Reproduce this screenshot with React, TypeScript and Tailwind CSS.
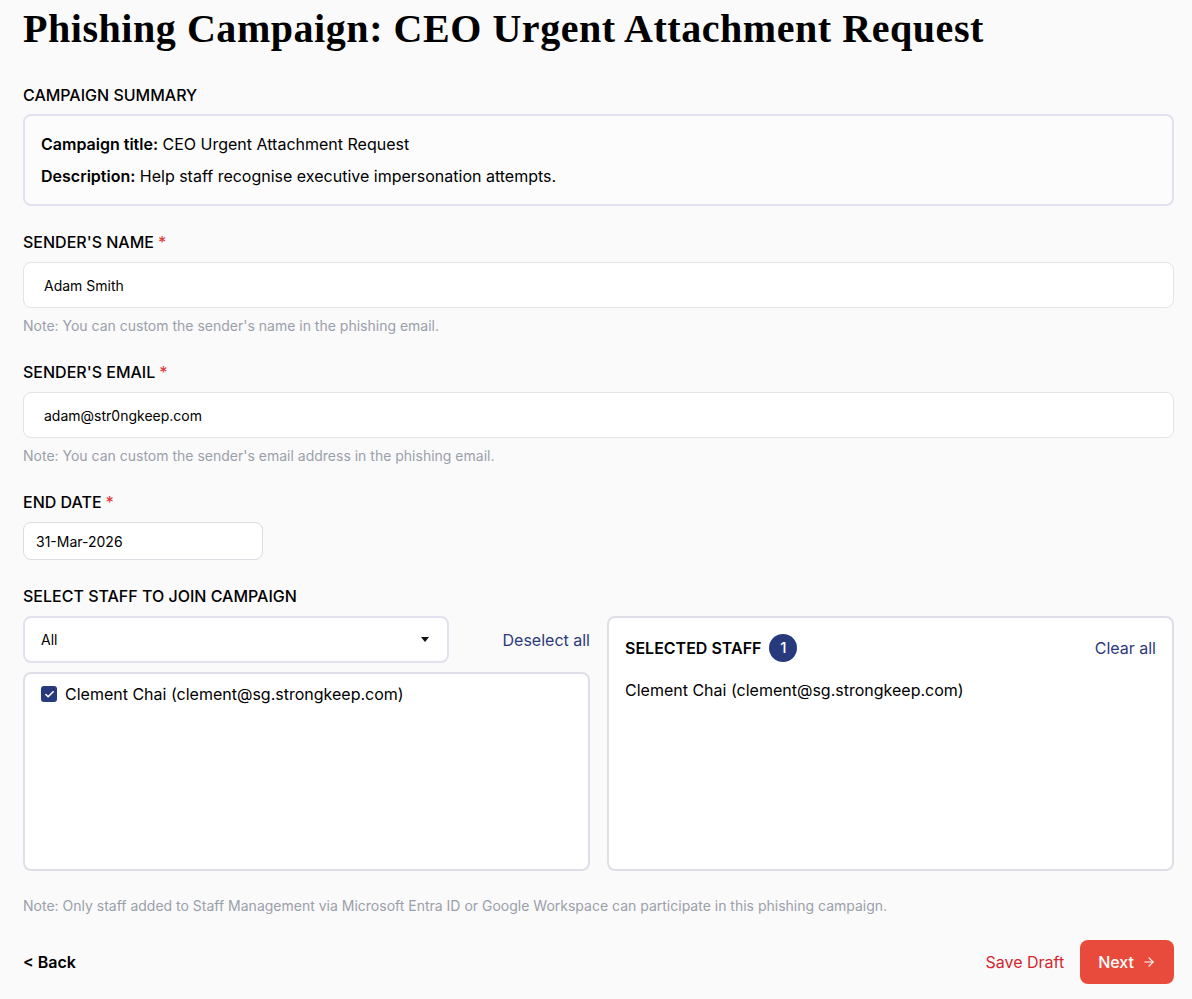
import { ArrowRight, Check } from "lucide-react";

const Label = ({ text, required }: { text: string; required?: boolean }) => (
  <div className="text-[16px] font-medium text-black leading-5">
    {text}
    {required && <span className="text-[#e03b3b] ml-1">*</span>}
  </div>
);

const Note = ({ children }: { children: React.ReactNode }) => (
  <p className="text-[14px] leading-4 text-[#9aa0ab]">{children}</p>
);

const App = () => {
  return (
    <div className="min-h-screen bg-[#fafafa] font-['Inter',sans-serif] text-black pl-[23px] pr-[18px] pt-[8px] pb-[16px]">
      <h1 className="font-['Liberation_Serif',serif] font-bold text-[40px] leading-[42px] tracking-[0.55px]">
        Phishing Campaign: CEO Urgent Attachment Request
      </h1>

      <div className="mt-[35px]">
        <Label text="CAMPAIGN SUMMARY" />
        <div className="mt-[9px] border-2 border-[#e2e2ee] rounded-lg bg-[#fcfcfd] px-[16px] pt-[18px] pb-[18px] text-[16px] leading-5 space-y-[12px]">
          <p>
            <span className="font-semibold">Campaign title:</span> CEO Urgent Attachment Request
          </p>
          <p>
            <span className="font-semibold">Description:</span> Help staff recognise executive impersonation attempts.
          </p>
        </div>
      </div>

      <div className="mt-[26px]">
        <Label text="SENDER'S NAME" required />
        <div className="mt-[10px] h-[46px] flex items-center border border-[#e3e3e8] rounded-lg bg-white px-[20px] text-[14px]">
          Adam Smith
        </div>
        <div className="mt-[10px]">
          <Note>Note: You can custom the sender's name in the phishing email.</Note>
        </div>
      </div>

      <div className="mt-[28px]">
        <Label text="SENDER'S EMAIL" required />
        <div className="mt-[10px] h-[46px] flex items-center border border-[#e3e3e8] rounded-lg bg-white px-[20px] text-[14px]">
          adam@str0ngkeep.com
        </div>
        <div className="mt-[10px]">
          <Note>Note: You can custom the sender's email address in the phishing email.</Note>
        </div>
      </div>

      <div className="mt-[28px]">
        <Label text="END DATE" required />
        <div className="mt-[10px] w-[240px] h-[38px] flex items-center border border-[#dcdce3] rounded-lg bg-white px-[12px] text-[14px]">
          31-Mar-2026
        </div>
      </div>

      <div className="mt-[26px]">
        <Label text="SELECT STAFF TO JOIN CAMPAIGN" />
        <div className="mt-[10px] grid grid-cols-2 gap-[17px]">
          <div className="flex flex-col">
            <div className="flex items-center justify-between">
              <div className="w-[426px] h-[47px] flex items-center justify-between border-2 border-[#e2e2ee] rounded-lg bg-white pl-[16px] pr-[16px] text-[14px]">
                <span>All</span>
                <svg width="8" height="5" viewBox="0 0 8 5" className="mr-[2px]">
                  <path d="M0 0h8L4 5z" fill="#111" />
                </svg>
              </div>
              <button className="text-[16px] text-[#2b3a7c]">Deselect all</button>
            </div>
            <div className="mt-[9px] h-[199px] border-2 border-[#dedee6] rounded-lg bg-white px-[16px] pt-[8px]">
              <label className="flex items-center gap-[8px] text-[16px]">
                <span className="w-[16px] h-[16px] rounded-[3px] bg-[#283a7e] flex items-center justify-center">
                  <Check className="w-[11px] h-[11px] text-white" strokeWidth={3.5} />
                </span>
                Clement Chai (clement@sg.strongkeep.com)
              </label>
            </div>
          </div>

          <div className="border-2 border-[#dedee6] rounded-lg bg-white px-[16px] pt-[16px]">
            <div className="flex items-center justify-between">
              <div className="flex items-center gap-[8px]">
                <span className="text-[16px] font-semibold">SELECTED STAFF</span>
                <span className="w-[28px] h-[28px] rounded-full bg-[#283a7e] text-white text-[15px] font-medium flex items-center justify-center">
                  1
                </span>
              </div>
              <button className="text-[16px] text-[#2b3a7c]">Clear all</button>
            </div>
            <p className="mt-[16px] text-[16px]">Clement Chai (clement@sg.strongkeep.com)</p>
          </div>
        </div>
        <div className="mt-[27px]">
          <Note>
            Note: Only staff added to Staff Management via Microsoft Entra ID or Google Workspace can participate in this phishing campaign.
          </Note>
        </div>
      </div>

      <div className="mt-[26px] flex items-center justify-between">
        <button className="text-[16px] font-semibold">&lt; Back</button>
        <div className="flex items-center gap-[16px]">
          <button className="text-[16px] text-[#d3262e]">Save Draft</button>
          <button className="h-[44px] px-[18px] rounded-lg bg-[#e84b3c] text-white text-[16px] font-medium flex items-center gap-[8px]">
            Next
            <ArrowRight className="w-[14px] h-[14px]" strokeWidth={2} />
          </button>
        </div>
      </div>
    </div>
  );
};

export default App;
